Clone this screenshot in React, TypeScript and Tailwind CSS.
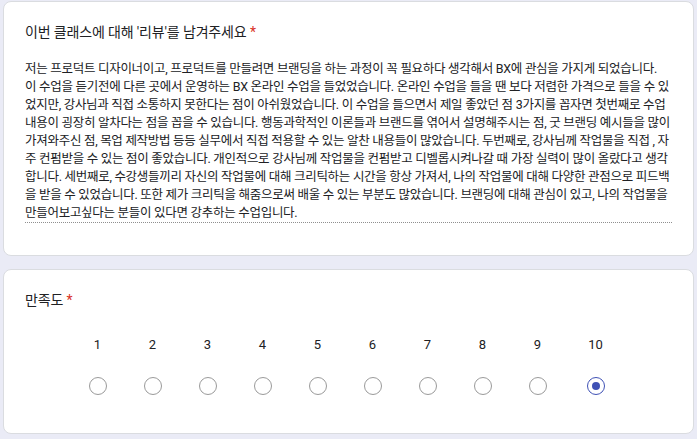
const lines = [
  '저는 프로덕트 디자이너이고, 프로덕트를 만들려면 브랜딩을 하는 과정이 꼭 필요하다 생각해서 BX에 관심을 가지게 되었습니다.',
  '이 수업을 듣기전에 다른 곳에서 운영하는 BX 온라인 수업을 들었었습니다. 온라인 수업을 들을 땐 보다 저렴한 가격으로 들을 수 있',
  '었지만, 강사님과 직접 소통하지 못한다는 점이 아쉬웠었습니다. 이 수업을 들으면서 제일 좋았던 점 3가지를 꼽자면 첫번째로 수업',
  '내용이 굉장히 알차다는 점을 꼽을 수 있습니다. 행동과학적인 이론들과 브랜드를 엮어서 설명해주시는 점, 굿 브랜딩 예시들을 많이',
  '가져와주신 점, 목업 제작방법 등등 실무에서 직접 적용할 수 있는 알찬 내용들이 많았습니다. 두번째로, 강사님께 작업물을 직접 , 자',
  '주 컨펌받을 수 있는 점이 좋았습니다. 개인적으로 강사님께 작업물을 컨펌받고 디벨롭시켜나갈 때 가장 실력이 많이 올랐다고 생각',
  '합니다. 세번째로, 수강생들끼리 자신의 작업물에 대해 크리틱하는 시간을 항상 가져서, 나의 작업물에 대해 다양한 관점으로 피드백',
  '을 받을 수 있었습니다. 또한 제가 크리틱을 해줌으로써 배울 수 있는 부분도 많았습니다. 브랜딩에 대해 관심이 있고, 나의 작업물을',
  '만들어보고싶다는 분들이 있다면 강추하는 수업입니다.',
];

const scale = [1, 2, 3, 4, 5, 6, 7, 8, 9, 10];
const selected = 10;

function Radio({ checked }: { checked: boolean }) {
  if (checked) {
    return (
      <div className="w-[18px] h-[18px] rounded-full border-[1.5px] border-[#3f51b5] flex items-center justify-center">
        <div className="w-[8px] h-[8px] rounded-full bg-[#3f51b5]" />
      </div>
    );
  }
  return <div className="w-[18px] h-[18px] rounded-full border-[1.5px] border-[#9a9a9a]" />;
}

export default function App() {
  const font = { fontFamily: "Roboto, 'Noto Sans CJK KR', sans-serif" };
  return (
    <div className="min-h-[439px] bg-[#eaebf6] px-[3px] pt-[1px] pb-[6px] flex flex-col gap-[13px] text-[#202124]" style={font}>
      <div className="bg-white border border-[#dadce0] rounded-lg pl-[21px] pr-[21px] pt-[20px] pb-[32px]">
        <div className="text-[14px] leading-5 tracking-[-0.15px]">
          이번 클래스에 대해 '리뷰'를 남겨주세요 <span className="text-[#d93025]">*</span>
        </div>
        <div className="mt-[18px] border-b border-dotted border-[#8f8f8f]">
          {lines.map((l, i) => (
            <div key={i} className="text-[12.5px] leading-[18px] tracking-[-0.28px] whitespace-nowrap">
              {l}
            </div>
          ))}
        </div>
      </div>

      <div className="bg-white border border-[#dadce0] rounded-lg pl-[21px] pr-[21px] pt-[20px] pb-[38px]">
        <div className="text-[14px] leading-5 tracking-[-0.15px]">
          만족도 <span className="text-[#d93025]">*</span>
        </div>
        <div className="mt-[25px] ml-[45px] flex">
          {scale.map((n) => (
            <div key={n} className={`${n === 10 ? 'w-[61px]' : 'w-[55px]'} flex flex-col items-center`}>
              <div className="text-[13px] leading-5">{n}</div>
              <div className="mt-[22px]">
                <Radio checked={n === selected} />
              </div>
            </div>
          ))}
        </div>
      </div>
    </div>
  );
}
